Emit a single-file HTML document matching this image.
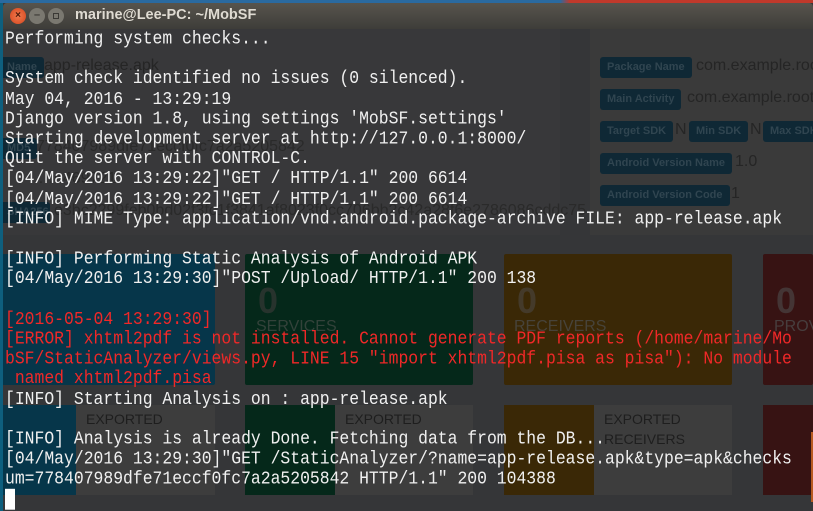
<!DOCTYPE html>
<html><head><meta charset="utf-8"><style>
*{margin:0;padding:0;box-sizing:border-box}
body{width:813px;height:511px;overflow:hidden;background:#353638;position:relative;font-family:"Liberation Sans",sans-serif}
.a{position:absolute}
.badge{position:absolute;background:#0f2835;color:#304550;font-weight:bold;font-size:11px;border-radius:3px;padding:4px 7px;height:21px;line-height:13px;white-space:nowrap}
.v{position:absolute;color:#252525;font-size:16px;white-space:nowrap}
.term{position:absolute;left:5px;top:30px;font-family:"Liberation Mono",monospace;font-size:16.4px;line-height:20px;color:#f0f0f0;white-space:pre;transform:scaleY(1.1);transform-origin:0 0}
.r{color:#f02828}
.lbl{position:absolute;color:#2e3a40;font-size:16px}
</style></head><body>
<div class="a" style="left:0;top:0;width:813px;height:3px;background:linear-gradient(90deg,#2a6aa0 0,#2a6aa0 560px,#c0392b 570px,#c0392b 813px)"></div>
<div class="a" style="left:0;top:28px;width:560px;height:207px;background:#38383a"></div>
<div class="a" style="left:590px;top:28px;width:223px;height:207px;background:#3a3a3a"></div>
<div class="badge" style="left:600px;top:57px">Package Name</div><div class="v" style="left:696px;top:57px">com.example.root</div>
<div class="badge" style="left:600px;top:89px">Main Activity</div><div class="v" style="left:687px;top:89px">com.example.root.</div>
<div class="badge" style="left:600px;top:121px">Target SDK</div><div class="v" style="left:675px;top:121px">N</div>
<div class="badge" style="left:689px;top:121px">Min SDK</div><div class="v" style="left:750px;top:121px">N</div>
<div class="badge" style="left:763px;top:121px">Max SDK</div>
<div class="badge" style="left:600px;top:153px">Android Version Name</div><div class="v" style="left:735px;top:153px">1.0</div>
<div class="badge" style="left:600px;top:185px">Android Version Code</div><div class="v" style="left:731px;top:185px">1</div>
<div class="badge" style="left:0;top:57px">Name</div><div class="v" style="left:44px;top:57px">app-release.apk</div>
<div class="badge" style="left:0;top:138px">MD5</div><div class="v" style="left:36px;top:138px;color:#2a2a2a">778407989dfe71eccf0fc7a2a5205842</div>
<div class="v" style="left:38px;top:170px;color:#2a2a2a">…e469721</div>
<div class="badge" style="left:0;top:202px;width:50px">SHA256</div><div class="v" style="left:54px;top:202px;color:#2a2a2a">e3bc2299feb0bd02f3fc1f3841af8023f0cc706bb2c42a28f6e2786086cddc75</div>
<div class="a" style="left:2px;top:254px;width:213px;height:131px;background:#06364a;border-radius:2px"></div>
<div class="a" style="left:245px;top:254px;width:228px;height:131px;background:#05281a;border-radius:2px"></div>
<div class="a" style="left:504px;top:254px;width:228px;height:131px;background:#3a2806;border-radius:2px"></div>
<div class="a" style="left:763px;top:254px;width:50px;height:131px;background:#371313;border-radius:2px"></div>
<div class="lbl" style="left:258px;top:280px;font-size:36px;font-weight:bold;color:#27332d">0</div>
<div class="lbl" style="left:517px;top:280px;font-size:36px;font-weight:bold;color:#443a2a">0</div>
<div class="lbl" style="left:776px;top:280px;font-size:36px;font-weight:bold;color:#443535">0</div>
<div class="lbl" style="left:256px;top:318px;color:#33423a">SERVICES</div>
<div class="lbl" style="left:514px;top:318px;color:#47433a">RECEIVERS</div>
<div class="lbl" style="left:774px;top:318px;color:#473e3e">PROVI</div>
<div class="a" style="left:2px;top:405px;width:74px;height:90px;background:#06364a"></div>
<div class="a" style="left:76px;top:405px;width:139px;height:90px;background:#3d3d3d"></div>
<div class="a" style="left:245px;top:405px;width:90px;height:90px;background:#05281a"></div>
<div class="a" style="left:335px;top:405px;width:138px;height:90px;background:#3d3d3d"></div>
<div class="a" style="left:504px;top:405px;width:90px;height:90px;background:#3a2806"></div>
<div class="a" style="left:594px;top:405px;width:138px;height:90px;background:#3d3d3d"></div>
<div class="a" style="left:763px;top:405px;width:50px;height:90px;background:#371313"></div>
<div class="a" style="left:811px;top:432px;width:2px;height:70px;background:#b85a20"></div>
<div class="lbl" style="left:86px;top:411px;font-size:14px;color:#1e1e1e">EXPORTED</div>
<div class="lbl" style="left:345px;top:411px;font-size:14px;color:#1e1e1e">EXPORTED</div>
<div class="lbl" style="left:604px;top:411px;font-size:14px;color:#1e1e1e">EXPORTED</div>
<div class="lbl" style="left:604px;top:431px;font-size:14px;color:#1e1e1e">RECEIVERS</div>
<div class="a" style="left:0;top:3px;width:3px;height:508px;background:#0e5f7e"></div>
<div class="a" style="left:3px;top:3px;width:810px;height:26px;background:linear-gradient(#57544d,#3e3d39);border-radius:4px 4px 0 0"></div>
<div class="a" style="left:10px;top:8px;width:16px;height:16px;border-radius:50%;background:radial-gradient(#f07a4e,#d5441c);color:#4a1a0a;font-size:10px;text-align:center;line-height:16px;font-weight:bold">×</div>
<div class="a" style="left:29px;top:8px;width:16px;height:16px;border-radius:50%;background:#7a7870;color:#3a3935;font-size:11px;text-align:center;line-height:15px;font-weight:bold">–</div>
<div class="a" style="left:48px;top:8px;width:16px;height:16px;border-radius:50%;background:#7a7870"><div class="a" style="left:5px;top:5px;width:6px;height:6px;border:1px solid #3a3935"></div></div>
<div class="a" style="left:75px;top:7px;color:#dfdbd2;font-weight:bold;font-size:14.5px">marine@Lee-PC: ~/MobSF</div>
<div class="term" style="top:29px;line-height:18.2px">Performing system checks...

System check identified no issues (0 silenced).
May 04, 2016 - 13:29:19
Django version 1.8, using settings 'MobSF.settings'
Starting development server at http://127.0.0.1:8000/
Quit the server with CONTROL-C.
[04/May/2016 13:29:22]"GET / HTTP/1.1" 200 6614
[04/May/2016 13:29:22]"GET / HTTP/1.1" 200 6614
[INFO] MIME Type: application/vnd.android.package-archive FILE: app-release.apk

[INFO] Performing Static Analysis of Android APK
[04/May/2016 13:29:30]"POST /Upload/ HTTP/1.1" 200 138

<span class="r">[2016-05-04 13:29:30]
[ERROR] xhtml2pdf is not installed. Cannot generate PDF reports (/home/marine/Mo
bSF/StaticAnalyzer/views.py, LINE 15 "import xhtml2pdf.pisa as pisa"): No module
 named xhtml2pdf.pisa</span>
[INFO] Starting Analysis on : app-release.apk

[INFO] Analysis is already Done. Fetching data from the DB...
[04/May/2016 13:29:30]"GET /StaticAnalyzer/?name=app-release.apk&amp;type=apk&amp;checks
um=778407989dfe71eccf0fc7a2a5205842 HTTP/1.1" 200 104388
<span style="background:#fff"> </span></div>
</body></html>
